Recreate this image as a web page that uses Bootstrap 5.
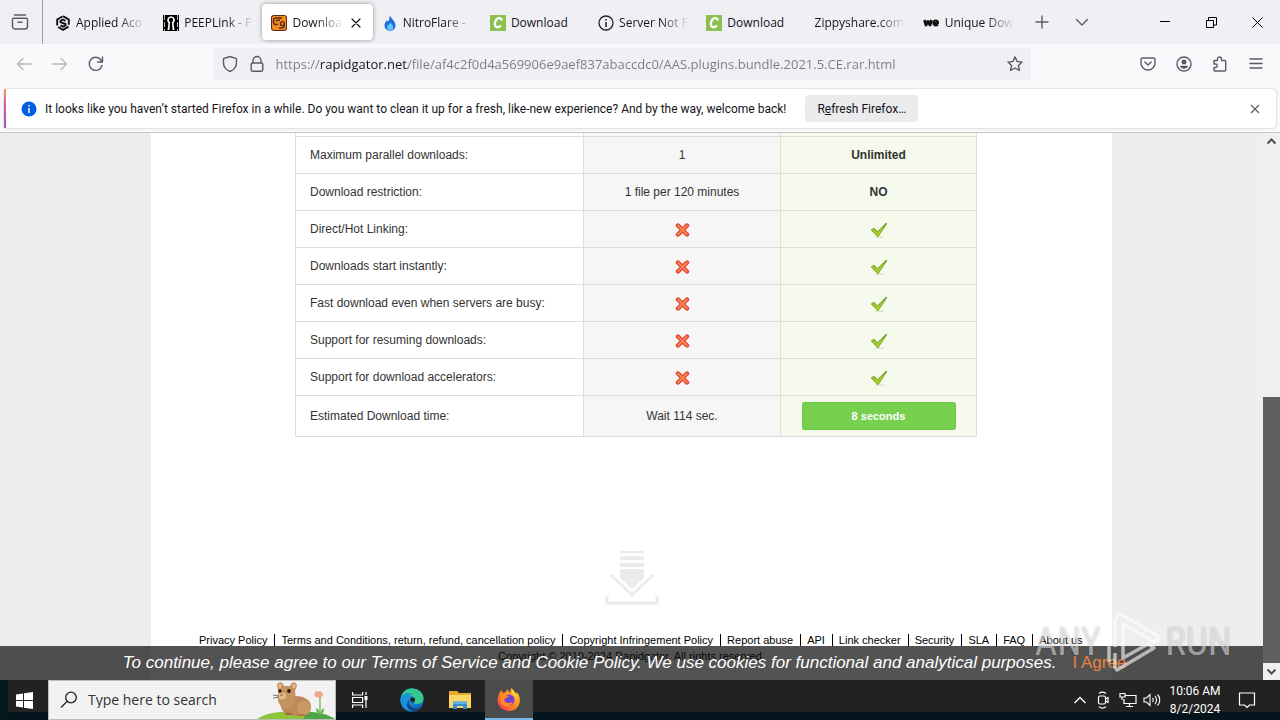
<!DOCTYPE html>
<html lang="en">
<head>
<meta charset="utf-8">
<meta name="viewport" content="width=device-width, initial-scale=1">
<title>Download file - Rapidgator</title>
<link href="https://cdn.jsdelivr.net/npm/bootstrap@5.3.0/dist/css/bootstrap.min.css" rel="stylesheet">
<style>
  body { font-family: "Open Sans", "Noto Sans", sans-serif; font-size: 12px; line-height: 16px; color: #15141a; background: #f9f9fb; }
  button { color: inherit; }
  svg { display: block; flex: none; }
  .ico { fill: none; stroke: #5b5b66; stroke-width: 1.4; stroke-linecap: round; stroke-linejoin: round; }
  .plain-btn { border: 0; background: none; padding: 0; display: flex; align-items: center; justify-content: center; flex: none; }

  /* tab strip */
  .tab-strip { background: #f0f0f4; height: 44px; }
  .pinned-view { width: 43px; border-right: 1px solid #a0a0a6; }
  .pinned-view svg { margin-right: 2px; }
  .tab-list { flex: 0 1 976px; min-width: 0; margin-left: 3px; }
  .browser-tab { flex: 1 1 0; min-width: 0; height: 36px; padding: 1px 8px 0 9px; gap: 5px; border-radius: 4px; }
  .browser-tab.current { background: #fff; box-shadow: 0 0 4px rgba(0,0,0,.4); padding-right: 10px; }
  .tab-label { flex: 1 1 0; min-width: 0; overflow: hidden; white-space: nowrap; text-align: left; -webkit-mask-image: linear-gradient(to left, transparent, #000 28px); mask-image: linear-gradient(to left, transparent, #000 28px); }
  .tab-label.full { -webkit-mask-image: none; mask-image: none; }
  .strip-btn { width: 40px; }
  .win-btn { width: 46px; height: 44px; }

  /* address bar */
  .nav-tools { height: 42px; padding-top: 4px; }
  .nav-group { padding: 0 6px; }
  .nav-btn { width: 36px; height: 32px; }
  .url-box { background: #f0f0f4; height: 32px; min-width: 0; flex: 0 1 817px; }
  .url-input { border: 0; outline: 0; padding: 0; font-size: 13px; line-height: 20px; min-width: 0; flex: 1 1 0; -webkit-text-fill-color: transparent; background: linear-gradient(to right, #7a7a82 45px, #15141a 45px, #15141a 132px, #7a7a82 132px); -webkit-background-clip: text; background-clip: text; }

  /* message bar */
  .notice-wrap { padding: 3px 4px 4px; border-bottom: 1px solid #c8c8c8; }
  .notice { height: 39px; background: #fff; border-radius: 4px; box-shadow: 0 0 2px rgba(0,0,0,.3); padding-left: 15px; overflow: hidden; border-left: 2px solid; border-image: linear-gradient(#f89b6a, #d3559a, #9059c9) 1; font-family: Roboto, "Open Sans", sans-serif; }
  .refresh-btn { background: #ebebee; border-radius: 4px; height: 27px; padding: 0 12px; margin-left: 19px; }
  .dismiss-btn { width: 42px; }

  /* page */
  .viewport { background: #eee; overflow: hidden; min-height: 0; font-family: "Liberation Sans", Arial, sans-serif; }
  .sheet { background: #fff; width: 961px; max-width: 100%; color: #333; }
  .compare { width: 682px; max-width: 100%; margin-left: 144px; font-size: 12px; line-height: 16px; table-layout: fixed; border-collapse: collapse; }
  .compare td, .compare th { border: 1px solid #deded8; height: 37px; padding: 0 14px; vertical-align: middle; font-weight: 400; }
  .compare .stub td { height: 3px; border-top: 0; padding: 0; }
  .compare .last td, .compare .last th { height: 41px; }
  .c-free { width: 197px; background: #f6f6f6; text-align: center; }
  .compare .c-prem { width: 196px; background: #f5faec; text-align: center; font-weight: 700; }
  .compare svg { margin: 2px auto 0; }
  .time-btn { width: 154px; height: 28px; border: 0; border-radius: 3px; background: #78d051; box-shadow: inset 0 0 3px #5cc433; color: #fff; font-weight: 700; font-size: 11px; }
  .drop-mark { margin: 113px auto 28px; }
  .foot-links { font-size: 11px; line-height: 12px; margin-left: 48px; white-space: nowrap; }
  .foot-links a { color: #000; text-decoration: none; padding-right: 7px; margin-right: 6px; border-right: 1px solid #000; }
  .foot-links a:last-child { border: 0; }
  .copy-line { font-size: 11px; line-height: 12px; color: #000; margin-top: 4px; }
  .scroll-rail { width: 17px; background: #f0f0f0; }
  .scroll-grip { background: #606060; flex: 0 0 266px; }
  .cookie-bar { position: absolute; left: 0; right: 17px; bottom: 0; height: 34px; padding-right: 14px; background: rgba(12,12,12,.71); color: #fff; font-size: 17px; white-space: nowrap; }
  .cookie-bar a { color: #e8823a; text-decoration: none; margin-left: 16px; }
  .stamp { position: absolute; right: 48px; bottom: 6px; gap: 3px; color: rgba(255,255,255,.5); font: 39px/50px "Roboto Condensed", Roboto, sans-serif; text-shadow: 0 0 2px rgba(0,0,0,.25); pointer-events: none; }

  /* taskbar */
  .task-bar { height: 40px; background: linear-gradient(#222 32px, #03141c 32px); color: #fff; }
  .task-start { width: 48px; height: 40px; border-left: 8px solid #03191e; }
  .task-start svg { margin-right: 8px; }
  .search-box { width: 288px; height: 40px; background: #f2f2f2; border: 1px solid #bbb; }
  .search-glass { margin: 0 10px 0 11px; }
  .search-input { border: 0; outline: 0; background: none; padding: 0; font-size: 14px; width: 160px; }
  .search-input::placeholder { color: #333; opacity: 1; }
  .task-btn { width: 48px; height: 40px; margin-left: 1px; }
  .task-btn.running { background: #4b4b4b; border-bottom: 2px solid #76b9ed; }
  .clock { font-size: 12px; line-height: 18px; text-align: center; width: 56px; white-space: nowrap; font-family: Roboto, sans-serif; }
  .tray { gap: 6px; padding-right: 15px; }
  .note-btn { width: 36px; }
</style>
</head>
<body class="vh-100 d-flex flex-column overflow-hidden">
<svg width="0" height="0" class="position-absolute" aria-hidden="true">
  <defs>
    <linearGradient id="grnG" x2="0" y2="1"><stop stop-color="#6f9f3c"/><stop offset="1" stop-color="#a6cf1d"/></linearGradient>
    <linearGradient id="edgeG" x2="1" y2="1"><stop stop-color="#2fb6e8"/><stop offset=".5" stop-color="#1b86d4"/><stop offset="1" stop-color="#0f5fb0"/></linearGradient>
    <linearGradient id="foxG" x1="1" x2="0" y2="1"><stop stop-color="#ffd93a"/><stop offset=".5" stop-color="#ff8a1f"/><stop offset="1" stop-color="#f0255f"/></linearGradient>
    <symbol id="cross" viewBox="0 0 16 16"><path d="M4 3.500l9 9M13 3.500l-9 9" stroke="#d8432c" stroke-width="4.400" stroke-linecap="round"/><path d="M4 3.500l9 9M13 3.500l-9 9" stroke="#f2603f" stroke-width="2.800" stroke-linecap="round"/><path d="M4 3.500l9 9M13 3.500l-9 9" stroke="#fb8a5c" stroke-width="1.400"/></symbol>
    <symbol id="tick" viewBox="0 0 18 16"><path d="M5 15.200h9" stroke="#dde3d0" stroke-width="1.500"/><path d="M1 8l3-2 3.500 3.500L16 1l1 .6L8 15z" fill="url(#grnG)" stroke="#83a832" stroke-width=".7"/><path d="M3 8l4.500 4L13 5.500" fill="none" stroke="#b4d83a" stroke-width="1"/></symbol>
    <symbol id="cfile" viewBox="0 0 16 16"><path fill="#8cc152" d="M0 0h16v16H0z"/><path d="M11.800 5.500c.3-3-4.600-3.400-6.300.5-1.500 3.500-.4 6.300 2 6.300 1.300 0 2.400-.7 3.300-1.700" fill="none" stroke="#fff" stroke-width="2.300"/></symbol>
  </defs>
</svg>

<header>
  <div class="tab-strip d-flex align-items-center">
    <button class="plain-btn pinned-view h-100" aria-label="Firefox View"><svg class="ico" width="18" height="18" viewBox="0 0 18 18"><path d="M3.500 2h11M2.500 5.200h13a1 1 0 0 1 1 1v7.300a2.500 2.500 0 0 1-2.500 2.500H4a2.500 2.500 0 0 1-2.500-2.500V6.200a1 1 0 0 1 1-1zM7 9.200h4"/></svg></button>
    <nav class="tab-list d-flex" aria-label="Tabs">
      <button class="plain-btn browser-tab"><svg width="16" height="16" viewBox="0 0 16 16"><path d="M8 1.200l5.800 3.300v7L8 14.800l-5.800-3.300v-7z" fill="none" stroke="#111" stroke-width="1.900" stroke-dasharray="12 2"/><path d="M10.500 5.800L8 4.500 5.500 5.800v1.400l5 1.800v1.400L8 11.700l-2.500-1.300" fill="none" stroke="#111" stroke-width="1.900"/></svg><span class="tab-label">Applied Aco</span></button>
      <button class="plain-btn browser-tab"><svg width="16" height="16" viewBox="0 0 16 16"><path d="M0 0h16v16H0z" fill="#000"/><path d="M8 1.200a4 4 0 0 0-2.500 7L4.500 15h7l-1-6.800A4 4 0 0 0 8 1.200z" fill="#fff"/><circle cx="8" cy="5" r="2.200" fill="#000"/><path d="M7.200 6h1.600l.9 10H6.300z" fill="#000"/><path d="M1.500 0v16M14.500 0v16" stroke="#fff" stroke-width=".7" stroke-dasharray="5 2"/></svg><span class="tab-label">PEEPLink - P</span></button>
      <button class="plain-btn browser-tab current" aria-current="page"><svg width="16" height="16" viewBox="0 0 16 16"><rect width="16" height="16" rx="3" fill="#5c2c12"/><rect x="1" y="1" width="14" height="14" rx="2" fill="#f28a20"/><path d="M6.800 9.500H5a2.500 2.500 0 0 1-2.500-2.500V5.500A2.500 2.500 0 0 1 5 3h6M8 13h2.800a2.500 2.500 0 0 0 2.500-2.500V8A2 2 0 0 0 9.500 8v1.500a1 1 0 0 0 1 1h2M5 6.500c.3-1 1-1.300 2-1.300h2" fill="none" stroke="#552b18" stroke-width="1.400"/></svg><span class="tab-label">Downloa</span><svg width="14" height="14" viewBox="0 0 14 14" class="ico"><path d="M3 3l8 8M11 3l-8 8" stroke="#15141a" stroke-width="1.200"/></svg></button>
      <button class="plain-btn browser-tab"><svg width="16" height="16" viewBox="0 0 16 16"><path d="M8 0c0 3 5.500 5.500 5.500 10.300A5.500 5.500 0 0 1 8 16a5.500 5.500 0 0 1-5.500-5.700C2.500 8 4 6.500 5 5c.3 1 .8 1.500 1.200 1.500C7.500 5 7.500 2 8 0z" fill="#1d6fe0"/><path d="M8.500 7c0 2 2.800 3 2.800 5.400C11.300 14.500 9.800 15.500 8 15.500s-3-1.300-3-3.200C5 10 8 9.500 8.500 7z" fill="#62c4fa"/></svg><span class="tab-label">NitroFlare - </span></button>
      <button class="plain-btn browser-tab"><svg width="16" height="16"><use href="#cfile"/></svg><span class="tab-label full">Download</span></button>
      <button class="plain-btn browser-tab"><svg width="16" height="16" viewBox="0 0 16 16" fill="none" stroke="#222" stroke-width="1.300"><circle cx="8" cy="8" r="7"/><path d="M8 7v5M8 4v1.600" stroke-width="1.500"/></svg><span class="tab-label">Server Not F</span></button>
      <button class="plain-btn browser-tab"><svg width="16" height="16"><use href="#cfile"/></svg><span class="tab-label full">Download</span></button>
      <button class="plain-btn browser-tab"><span class="tab-label">Zippyshare.com</span></button>
      <button class="plain-btn browser-tab"><svg width="17" height="16" viewBox="0 0 17 16" fill="none" stroke="#111" stroke-width="2.800" stroke-linejoin="round"><path d="M1.500 5l1.500 5 2-3.500L7 10l1.500-5"/><path d="M10.800 8.200h4.200c0-3.600-4.600-3.500-4.600-.3 0 2.700 2.600 3 4.600 1.900" stroke-width="2.200"/></svg><span class="tab-label">Unique Dow</span></button>
    </nav>
    <button class="plain-btn strip-btn" aria-label="New tab"><svg class="ico" width="14" height="14" viewBox="0 0 14 14"><path d="M7 1v12M1 7h12"/></svg></button>
    <button class="plain-btn strip-btn" aria-label="List all tabs"><svg class="ico" width="14" height="14" viewBox="0 0 14 14"><path d="M1.500 4.500L7 10l5.500-5.500"/></svg></button>
    <div class="d-flex ms-auto">
      <button class="plain-btn win-btn" aria-label="Minimize"><svg width="10" height="10"><path d="M0 4.500h10" stroke="#000"/></svg></button>
      <button class="plain-btn win-btn" aria-label="Restore"><svg width="11" height="11" viewBox="0 0 11 11" fill="none" stroke="#000"><path d="M.5 3.500h7v7h-7zM2.500 3.500v-3h8v7.500h-3"/></svg></button>
      <button class="plain-btn win-btn" aria-label="Close"><svg width="11" height="11"><path d="M.5.5l10 10M10.500.5l-10 10" stroke="#000"/></svg></button>
    </div>
  </div>

  <div class="nav-tools d-flex align-items-start">
    <div class="nav-group d-flex">
      <button class="plain-btn nav-btn" aria-label="Back"><svg class="ico" width="16" height="16" viewBox="0 0 16 16" opacity=".42"><path d="M15 8H1.500M7 2.500L1.500 8 7 13.500"/></svg></button>
      <button class="plain-btn nav-btn" aria-label="Forward"><svg class="ico" width="16" height="16" viewBox="0 0 16 16" opacity=".42"><path d="M1 8h13.500M9 2.500L14.500 8 9 13.500"/></svg></button>
      <button class="plain-btn nav-btn" aria-label="Reload"><svg class="ico" width="16" height="16" viewBox="0 0 16 16"><path d="M14 9.500A6.500 6.500 0 1 1 13 4l1 1.500M14.500 1v5h-5"/></svg></button>
    </div>
    <div class="url-box d-flex align-items-center ms-auto px-2">
      <svg class="ico" width="16" height="18" viewBox="0 0 16 18"><path d="M8 1.500l6.500 2.200v4c0 4-3 7.300-6.500 8.800-3.500-1.500-6.500-4.800-6.500-8.800v-4z"/></svg>
      <svg class="ico mx-2" width="22" height="18" viewBox="0 0 22 18"><path d="M7 8V5.500a4 4 0 0 1 8 0V8M6.500 8h9a1.300 1.300 0 0 1 1.300 1.300v5.200a1.800 1.800 0 0 1-1.800 1.800H7a1.800 1.800 0 0 1-1.800-1.800V9.300A1.300 1.300 0 0 1 6.500 8z"/></svg>
      <input class="url-input" type="text" aria-label="Address" value="https://rapidgator.net/file/af4c2f0d4a569906e9aef837abaccdc0/AAS.plugins.bundle.2021.5.CE.rar.html">
      <svg class="ico" width="16" height="16" viewBox="0 0 16 16"><path d="M8 .9l2.100 4.600 5 .6-3.700 3.400 1 5L8 12l-4.400 2.500 1-5L.9 6.100l5-.6z"/></svg>
    </div>
    <div class="nav-group d-flex ms-auto">
      <button class="plain-btn nav-btn" aria-label="Pocket"><svg class="ico" width="16" height="16" viewBox="0 0 16 16"><path d="M2.500 2h11a1.500 1.500 0 0 1 1.500 1.500V7A7 7 0 0 1 1 7V3.500A1.500 1.500 0 0 1 2.500 2zM4.800 6L8 9l3.200-3"/></svg></button>
      <button class="plain-btn nav-btn" aria-label="Account"><svg class="ico" width="16" height="16" viewBox="0 0 16 16"><circle cx="8" cy="8" r="7"/><circle cx="8" cy="6" r="2.500" fill="#5b5b66" stroke="none"/><path d="M3.800 9.800h8.400c-.6 2-2.200 3-4.200 3s-3.600-1-4.200-3z" fill="#5b5b66" stroke="none"/></svg></button>
      <button class="plain-btn nav-btn" aria-label="Extensions"><svg class="ico" width="16" height="16" viewBox="0 0 16 16"><path d="M2 4.500h3.500V3a2 2 0 0 1 4 0v1.500h3.200a1 1 0 0 1 1 1V14a1 1 0 0 1-1 1H3a1 1 0 0 1-1-1v-2.500h1.500a1.700 1.700 0 0 0 0-3.500H2z"/></svg></button>
      <button class="plain-btn nav-btn" aria-label="Menu"><svg class="ico" width="14" height="14" viewBox="0 0 14 14"><path d="M1 2h12M1 6.500h12M1 11h12"/></svg></button>
    </div>
  </div>

  <div class="notice-wrap">
    <div class="notice d-flex align-items-center" role="status">
      <svg class="me-2" width="16" height="16" viewBox="0 0 16 16"><circle cx="8" cy="8" r="7.500" fill="#0060df"/><path d="M8 7v5M8 4v1.500" stroke="#fff" stroke-width="1.500"/></svg>
      <span class="text-nowrap">It looks like you haven’t started Firefox in a while. Do you want to clean it up for a fresh, like-new experience? And by the way, welcome back!</span>
      <button class="plain-btn refresh-btn"><span>R<u>e</u>fresh Firefox…</span></button>
      <button class="plain-btn dismiss-btn ms-auto" aria-label="Dismiss"><svg width="10" height="10"><path d="M1 1l8 8M9 1L1 9" stroke="#5b5b66" stroke-width="1.200"/></svg></button>
    </div>
  </div>
</header>

<main class="viewport flex-grow-1 d-flex position-relative">
  <div class="flex-grow-1 d-flex justify-content-center">
    <div class="sheet">
      <table class="compare">
        <colgroup><col><col class="c-free"><col class="c-prem"></colgroup>
        <tbody>
          <tr class="stub"><td></td><td class="c-free"></td><td class="c-prem"></td></tr>
          <tr><th scope="row">Maximum parallel downloads:</th><td class="c-free">1</td><td class="c-prem">Unlimited</td></tr>
          <tr><th scope="row">Download restriction:</th><td class="c-free">1 file per 120 minutes</td><td class="c-prem">NO</td></tr>
          <tr><th scope="row">Direct/Hot Linking:</th><td class="c-free"><svg width="16" height="16"><use href="#cross"/></svg></td><td class="c-prem"><svg width="18" height="16"><use href="#tick"/></svg></td></tr>
          <tr><th scope="row">Downloads start instantly:</th><td class="c-free"><svg width="16" height="16"><use href="#cross"/></svg></td><td class="c-prem"><svg width="18" height="16"><use href="#tick"/></svg></td></tr>
          <tr><th scope="row">Fast download even when servers are busy:</th><td class="c-free"><svg width="16" height="16"><use href="#cross"/></svg></td><td class="c-prem"><svg width="18" height="16"><use href="#tick"/></svg></td></tr>
          <tr><th scope="row">Support for resuming downloads:</th><td class="c-free"><svg width="16" height="16"><use href="#cross"/></svg></td><td class="c-prem"><svg width="18" height="16"><use href="#tick"/></svg></td></tr>
          <tr><th scope="row">Support for download accelerators:</th><td class="c-free"><svg width="16" height="16"><use href="#cross"/></svg></td><td class="c-prem"><svg width="18" height="16"><use href="#tick"/></svg></td></tr>
          <tr class="last"><th scope="row">Estimated Download time:</th><td class="c-free">Wait 114 sec.</td><td class="c-prem"><button class="time-btn">8 seconds</button></td></tr>
        </tbody>
      </table>
      <svg class="drop-mark" width="54" height="56" viewBox="0 0 54 56"><path d="M15 1h24v2H15zM15 6h24v4H15zM15 13h24v4H15zM15 19h24v9L27 39 15 28z" fill="#ebebeb"/><path d="M6 25l21 20 21-20M2 46v7h50v-7" fill="none" stroke="#ebebeb" stroke-width="3"/></svg>
      <footer>
        <nav class="foot-links d-flex" aria-label="Footer"><a href="#">Privacy Policy</a><a href="#">Terms and Conditions, return, refund, cancellation policy</a><a href="#">Copyright Infringement Policy</a><a href="#">Report abuse</a><a href="#">API</a><a href="#">Link checker</a><a href="#">Security</a><a href="#">SLA</a><a href="#">FAQ</a><a href="#">About us</a></nav>
        <p class="copy-line text-center mb-0">Copyright © 2010-2024 Rapidgator. All rights reserved.</p>
      </footer>
    </div>
  </div>
  <div class="scroll-rail d-flex flex-column align-items-center" aria-hidden="true">
    <svg width="17" height="17" viewBox="0 0 17 17"><path d="M4.500 10.500l4-4 4 4" fill="none" stroke="#505050" stroke-width="2"/></svg>
    <div class="scroll-grip w-100 mt-auto"></div>
    <svg width="17" height="17" viewBox="0 0 17 17"><path d="M4.500 6.500l4 4 4-4" fill="none" stroke="#505050" stroke-width="2"/></svg>
  </div>
  <div class="cookie-bar d-flex align-items-center justify-content-center"><em>To continue, please agree to our Terms of Service and Cookie Policy. We use cookies for functional and analytical purposes.</em><a href="#">I Agree</a></div>
  <div class="stamp d-flex align-items-center"><span>ANY</span><svg width="58" height="64" viewBox="0 0 58 64" fill="none" stroke="rgba(255,255,255,.6)" stroke-width="3.500" stroke-linejoin="round"><path d="M5 12v40M11 37V10l4-7 39 23v4l-4 2-31-18v34l25-14 6 4-37 22-2-3V43"/></svg><span>RUN</span></div>
</main>

<footer class="task-bar d-flex align-items-center">
  <button class="plain-btn task-start" aria-label="Start"><svg width="17" height="17" viewBox="0 0 17 17" fill="#fff"><path d="M0 2.500l7-1V8H0zM8 1.300L17 0v8H8zM0 9h7v6.500l-7-1zM8 9h9v8l-9-1.300z"/></svg></button>
  <label class="search-box d-flex align-items-center flex-shrink-0">
    <svg class="search-glass" width="18" height="18" viewBox="0 0 18 18" fill="none" stroke="#222" stroke-width="1.300"><circle cx="11" cy="6.500" r="5.300"/><path d="M7 10.500L1 16.500"/></svg>
    <input class="search-input" type="search" placeholder="Type here to search" aria-label="Type here to search">
    <svg class="ms-auto align-self-end" width="78" height="38" viewBox="0 0 78 38"><path d="M0 38c8-6 24-8 40-8 14 0 28 2 38 8z" fill="#8cc63a"/><path d="M50 31c10 0 20 2 28 7H46z" fill="#4fa648"/><path d="M63 33V16" stroke="#62b04a" stroke-width="1.200"/><path d="M63 34c-3-1-4-4-4-7 3 1 4 4 4 7 0-4 2-6 4-7 0 4-1 6-4 7z" fill="#69b856"/><path d="M58 12c0-2 2-2 3-1 1-2 4-1 4 1 2 1 1 4-1 4-2 1-5 1-6-1-1-1-1-2 0-3z" fill="#f2a58c"/><ellipse cx="39" cy="25" rx="15" ry="10" fill="#bd8a58"/><path d="M20 5c0-4 4-5 6-2l1 2h6l1-2c2-3 6-2 6 2l-2 5c1 6 0 13-3 16l-8 2c-5-3-7-9-6-14 0-4 0-6-1-9z" fill="#c4935f"/><ellipse cx="23" cy="5" rx="1.600" ry="2.200" fill="#e8b894"/><ellipse cx="37" cy="5" rx="1.600" ry="2.200" fill="#e8b894"/><ellipse cx="25" cy="15" rx="4" ry="3.500" fill="#e0b98c"/><circle cx="23" cy="10" r="1.700" fill="#2c1b12"/><circle cx="32" cy="10" r="1.900" fill="#2c1b12"/><path d="M16 14l6 1M16 17l6-1M23 14l3 0" stroke="#555" stroke-width=".8"/><ellipse cx="47" cy="27" rx="7" ry="7" fill="#ca9966"/><path d="M28 33c0-2 7-2 8 1h-8zM40 35c1-2 9-2 10 0z" fill="#a96c38"/></svg>
  </label>
  <button class="plain-btn task-btn ms-0" aria-label="Task view"><svg width="16" height="16" viewBox="0 0 16 16" fill="none" stroke="#fff" stroke-width="1.200"><path d="M.6 0v3h10V0M.6 5.500h10v5H.6zM.6 16v-3h10v3M14 0v3M14 8v8"/><path d="M14 4v4" stroke-width="3"/></svg></button>
  <button class="plain-btn task-btn ms-1" aria-label="Edge"><svg width="24" height="24" viewBox="0 0 24 24"><circle cx="12" cy="12" r="11.500" fill="url(#edgeG)"/><path d="M1 9C3 3 7 .5 12 .5c7 0 11.500 5 11.500 9.500 0 4-3 6-6.500 6-3 0-3.500-1.200-2.500-2.500C16 11 14 7.500 10 7.500 6 7.500 2.500 8 1 9z" fill="#36c98f"/><path d="M1 9c3-4 8-5 12-2-5-1-8 3-7 8 1 4 4 7 7 8.500C6 23.500.5 19 .5 12z" fill="#1a91dc"/><path d="M9 12c-1 5 3 8 7 8 3 0 5-1 6-2-2 4-6 5.500-9 5.500-6-1-8-8-4-11.500z" fill="#114a8b"/><path d="M10 11c1-2 4-2 5 0 .5 1-1 2-1 3.500-2 0-4-1.500-4-3.500z" fill="#222"/></svg></button>
  <button class="plain-btn task-btn ms-0" aria-label="File Explorer"><svg width="22" height="20" viewBox="0 0 22 20"><path d="M0 1h8l2 2h12v15H0z" fill="#e9a92c"/><path d="M0 5h22v13H0z" fill="#fdd766"/><path d="M4 19v-7.500h14V19h-4v-3H8v3z" fill="#3a8fd0"/><path d="M4 11.500h14V14H4z" fill="#62b5ea"/></svg></button>
  <button class="plain-btn task-btn running" aria-label="Firefox"><svg width="24" height="24" viewBox="0 0 24 24"><path d="M2 7l2-4 2 3 3-1 1-3 3 4 1-5c3 2 4 4 5 6l1-2c6 8 2 19-8 19C3 24-2 15 2 7z" fill="url(#foxG)"/><circle cx="12" cy="13" r="5.500" fill="#7541d6"/><path d="M4 9c3-2 5 0 8 0-2 2-4 2-5 4 1 3 5 4 9 2-2 5-9 6-12 1-1-3-1-5 0-7z" fill="#ff8b25"/><path d="M15 2c2 3 5 6 5 11-1-4-3-4-4-6-1-1-1-3-1-5z" fill="#ffdf45"/></svg></button>
  <div class="tray d-flex align-items-center ms-auto">
    <svg width="18" height="18" viewBox="0 0 18 18" fill="none" stroke="#fff" stroke-width="1.400"><path d="M3.500 12L9 6.500l5.500 5.500"/></svg>
    <svg width="18" height="18" viewBox="0 0 18 18" fill="none" stroke="#fff" stroke-width="1.200"><rect x="3.500" y="5" width="7" height="8" rx="1.500"/><path d="M10.500 8l2.500-1.500v5L10.500 10M4 2.500c2-1.500 5-1.500 7 0M4 15.700c2 1.500 5 1.500 7 0"/></svg>
    <svg width="18" height="18" viewBox="0 0 18 18" fill="none" stroke="#fff" stroke-width="1.200"><path d="M6 4.500h11v8H5V8M10.500 12.500v3M7 15.500h7M1 2.500h5V6H1zM3 6v3"/></svg>
    <svg width="18" height="18" viewBox="0 0 18 18" fill="none" stroke="#fff" stroke-width="1.100"><path d="M1 7h2.500L7 3.500v11L3.500 11H1zM9.500 7c1 1 1 3 0 4M12 5c2 2 2 6 0 8M14.500 3.500c3 3 3 8 0 11"/></svg>
    <div class="clock"><div>10:06 AM</div><div>8/2/2024</div></div>
    <button class="plain-btn note-btn" aria-label="Notifications"><svg width="18" height="18" viewBox="0 0 18 18" fill="none" stroke="#fff" stroke-width="1.200"><path d="M1.500 2h15v12h-5L9 16.500 6.500 14h-5z"/></svg></button>
  </div>
</footer>
<script src="https://cdn.jsdelivr.net/npm/bootstrap@5.3.0/dist/js/bootstrap.bundle.min.js"></script>
</body>
</html>
